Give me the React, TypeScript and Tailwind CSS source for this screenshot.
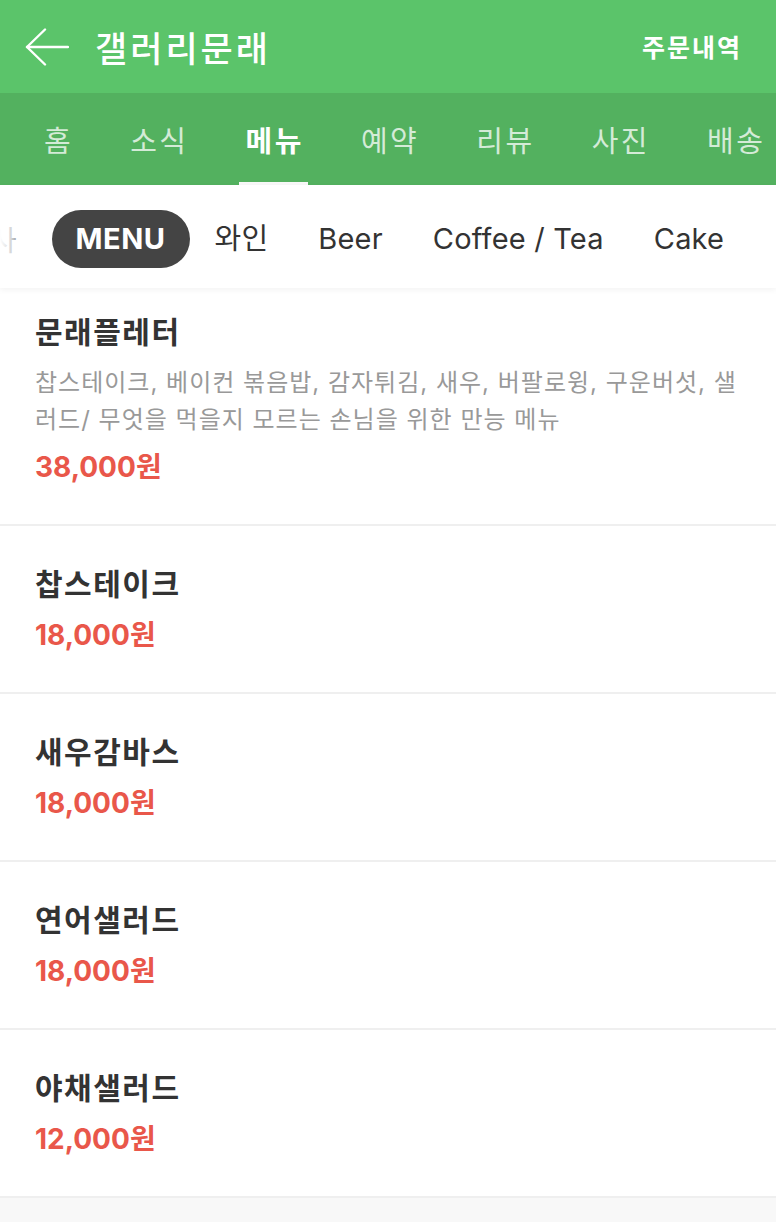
import { ReactNode } from "react";

const tabs = ["홈", "소식", "메뉴", "예약", "리뷰", "사진", "배송", "정보"];
const categories = ["MENU", "와인", "Beer", "Coffee / Tea", "Cake"];

const items = [
  { name: "찹스테이크", price: "18,000원" },
  { name: "새우감바스", price: "18,000원" },
  { name: "연어샐러드", price: "18,000원" },
  { name: "야채샐러드", price: "12,000원" },
];

function BackArrow() {
  return (
    <svg width="44" height="38" viewBox="0 0 44 38" fill="none" stroke="white" strokeWidth="2.4" strokeLinecap="round" strokeLinejoin="round">
      <path d="M43 19H2" />
      <path d="M20 1.5L2 19l18 17.5" />
    </svg>
  );
}

function MenuRow({ children, first }: { children: ReactNode; first?: boolean }) {
  return (
    <div className={`bg-white border-b-2 border-[#efefef] px-[35px] ${first ? "pt-[25px] pb-[40px]" : "pt-[39px] pb-[40px]"}`}>
      {children}
    </div>
  );
}

export default function App() {
  return (
    <div className="min-h-screen bg-[#f8f8f8] font-['Inter','Noto_Sans_CJK_KR',sans-serif] overflow-hidden">
      {/* Top bar */}
      <div className="h-[93px] bg-[#5bc46a] flex items-center pl-[25px] pr-[34px]">
        <BackArrow />
        <span className="ml-[26px] text-white text-[35px] tracking-[3px] font-medium font-['Noto_Sans_CJK_KR',sans-serif] leading-none">
          갤러리문래
        </span>
        <span className="ml-auto text-white text-[25px] tracking-[2px] font-semibold font-['Noto_Sans_CJK_KR',sans-serif] leading-none">
          주문내역
        </span>
      </div>

      {/* Section tabs */}
      <div className="h-[92px] bg-[#53b15f] flex items-stretch pl-[37px] gap-[46px] whitespace-nowrap overflow-hidden">
        {tabs.map((t) => {
          const active = t === "메뉴";
          return (
            <div key={t} className="relative shrink-0 flex items-center pl-[7px] pr-[4px] pt-[1px]">
              <span
                className={`text-[29px] tracking-[2.5px] font-['Noto_Sans_CJK_KR',sans-serif] ${
                  active ? "text-white font-bold" : "text-white/75"
                }`}
              >
                {t}
              </span>
              {active && <div className="absolute left-0 right-0 bottom-0 h-[3px] bg-[#f8f8f8]" />}
            </div>
          );
        })}
      </div>

      {/* Category chips */}
      <div className="relative z-10 h-[103px] pt-[5px] bg-white flex items-center whitespace-nowrap shadow-[0_2px_6px_rgba(0,0,0,0.05)]">
        <div className="-ml-[60px] pl-[25px] pr-[35px] text-[28px] text-[#333] font-['Noto_Sans_CJK_KR',sans-serif]">식사</div>
        <div className="absolute left-0 top-0 bottom-0 w-[22px] bg-gradient-to-r from-white via-white/80 to-white/30" />
        {categories.map((c) =>
          c === "MENU" ? (
            <div
              key={c}
              className="h-[58px] px-[24px] rounded-full bg-[#444] text-white text-[29px] font-bold tracking-[0.5px] flex items-center"
            >
              {c}
            </div>
          ) : (
            <div key={c} className="px-[25px] text-[29px] tracking-[0.2px] text-[#333]">
              {c}
            </div>
          )
        )}
      </div>

      {/* Menu list */}
      <div>
        <MenuRow first>
          <div className="text-[30px] leading-[38px] tracking-[1.5px] font-bold text-[#333]">문래플레터</div>
          <div className="mt-[13px] text-[24px] leading-[37px] tracking-[1px] text-[#999]">
            찹스테이크, 베이컨 볶음밥, 감자튀김, 새우, 버팔로윙, 구운버섯, 샐러드/ 무엇을 먹을지 모르는 손님을 위한 만능 메뉴
          </div>
          <div className="mt-[12px] text-[28px] leading-[34px] font-bold text-[#e9574a]">38,000원</div>
        </MenuRow>
        {items.map((it) => (
          <MenuRow key={it.name}>
            <div className="text-[30px] leading-[38px] tracking-[1.5px] font-bold text-[#333]">{it.name}</div>
            <div className="mt-[15px] text-[28px] leading-[34px] font-bold text-[#e9574a]">{it.price}</div>
          </MenuRow>
        ))}
      </div>
    </div>
  );
}
